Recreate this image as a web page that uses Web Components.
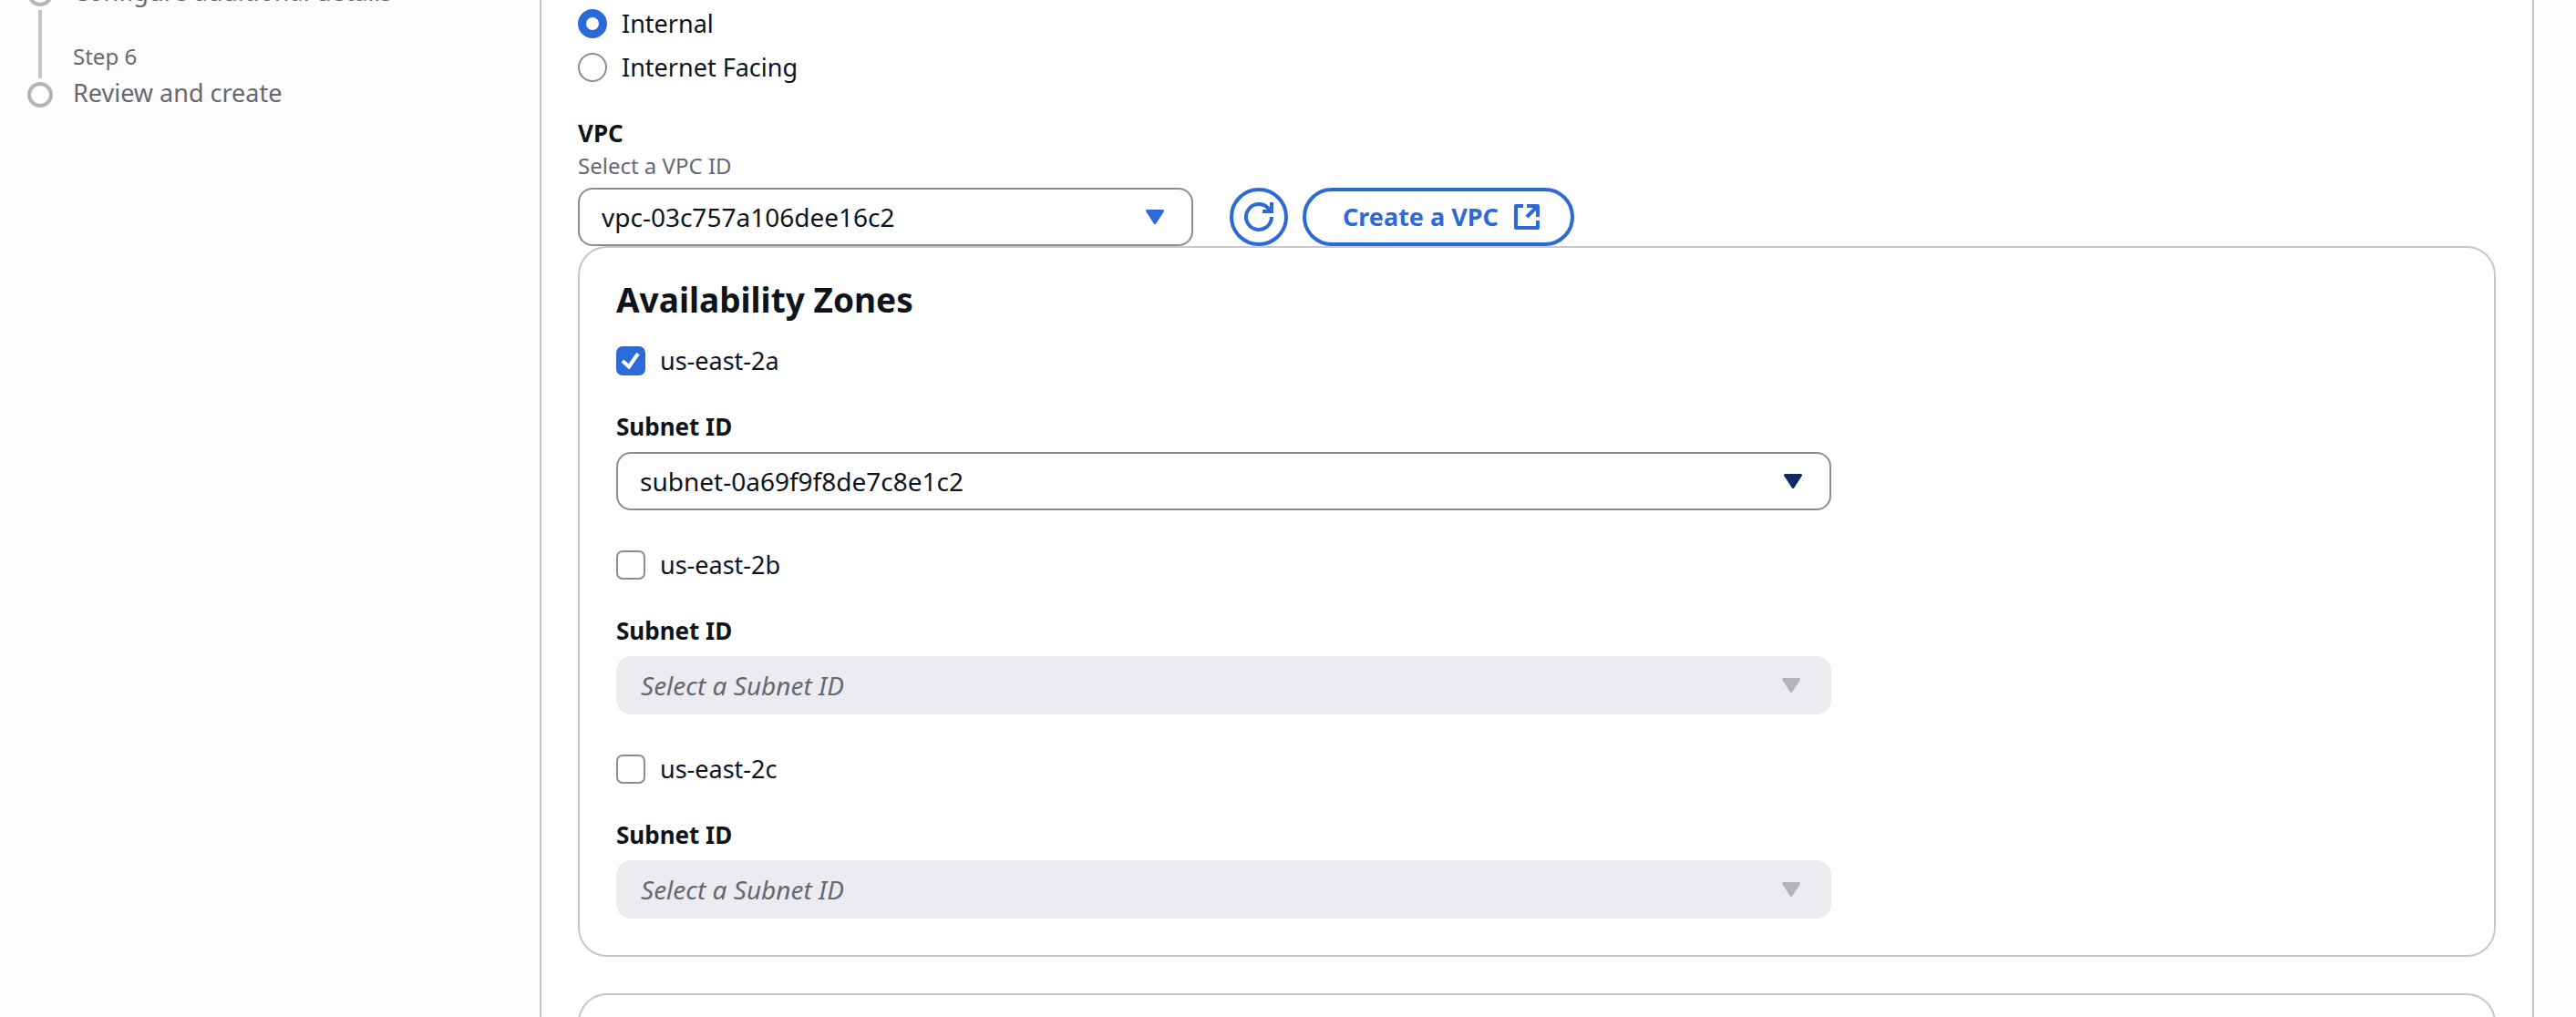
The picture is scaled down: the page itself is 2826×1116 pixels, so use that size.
<!DOCTYPE html>
<html lang="en">
<head>
<meta charset="utf-8">
<title>Create wizard</title>
<style>
  :root {
    --text: #0f141a;
    --muted: #656871;
    --accent: #2c6ad9;
    --accent-dark: #102a66;
    --line: #c6c6cd;
    --control: #8c8c94;
    --disabled: #ebebf0;
    --surface: #fcfcfd;
  }
  html { overflow: hidden; }
  body {
    margin: 0;
    background: var(--surface);
    color: var(--text);
    font: 450 27px/40px "Noto Sans", "Open Sans", sans-serif;
  }
</style>
</head>
<body>
<wizard-page></wizard-page>

<script>
const define = (name, html, setup) => {
  const template = document.createElement('template');
  template.innerHTML = html;
  customElements.define(name, class extends HTMLElement {
    connectedCallback() {
      if (this.shadowRoot) return;
      const root = this.attachShadow({ mode: 'open' });
      root.append(template.content.cloneNode(true));
      if (setup) setup(this, root);
    }
  });
};

// One step of the wizard: a marker column beside the step number and title.
define('wizard-step', `
  <style>
    :host { display: grid; grid-template-columns: 28px 1fr; column-gap: 22px; color: var(--muted); }
    .marker { display: flex; flex-direction: column; align-items: center; justify-content: flex-end; gap: 4px; padding-bottom: 4px; }
    .bar { display: none; flex: 1; width: 4px; background: var(--line); }
    .ring { box-sizing: border-box; width: 28px; height: 28px; border: 4px solid #b4b4bb; border-radius: 50%; background: #fff; box-shadow: 0 0 0 4px #fff; }
    .number { display: none; font-size: 24px; line-height: 32px; margin-bottom: 4px; }
    :host([number]) .bar, :host([number]) .number { display: block; }
    :host([number]) .body { padding-top: 35px; }
  </style>
  <div class="marker"><span class="bar"></span><span class="ring"></span></div>
  <div class="body"><div class="number"></div><div class="title"><slot></slot></div></div>
`, (el, root) => {
  if (el.hasAttribute('number')) root.querySelector('.number').textContent = 'Step ' + el.getAttribute('number');
});

define('wizard-steps', `
  <style>
    :host { display: block; }
    nav { padding-left: 30px; margin-top: -29px; }
  </style>
  <nav aria-label="Steps"><slot></slot></nav>
`);

define('choice-input', `
  <style>
    :host { display: block; }
    label { display: flex; align-items: center; gap: 16px; width: fit-content; }
    input {
      appearance: none; box-sizing: border-box; flex: none; margin: 0;
      width: 32px; height: 32px; border: 2px solid var(--control); background: #fff;
      display: grid; place-items: center;
    }
    input, svg { grid-area: 1 / 1; }
    .box { display: grid; place-items: center; }
    input[type=radio] { border-radius: 50%; }
    input[type=radio]:checked { border: 9px solid var(--accent); }
    input[type=checkbox] { border-radius: 7px; }
    input[type=checkbox]:checked { background: var(--accent); border-color: var(--accent); }
    svg { display: none; pointer-events: none; }
    input[type=checkbox]:checked + svg { display: block; }
  </style>
  <label>
    <span class="box">
      <input>
      <svg width="32" height="32" viewBox="0 0 32 32" fill="none" stroke="#fff" stroke-width="4"><path d="M7 16l7 6.500L24 8"/></svg>
    </span>
    <span><slot></slot></span>
  </label>
`, (el, root) => {
  const input = root.querySelector('input');
  input.type = el.getAttribute('type');
  input.name = el.getAttribute('name') || '';
  input.checked = el.hasAttribute('checked');
});

define('select-field', `
  <style>
    :host { display: block; }
    label { display: block; font-size: 26px; font-weight: 700; width: fit-content; }
    .hint { display: none; font-size: 24px; line-height: 32px; color: var(--muted); }
    :host([hint]) .hint { display: block; }
    .control { display: grid; align-items: center; margin-top: 8px; }
    select, svg { grid-area: 1 / 1; }
    select {
      appearance: none; box-sizing: border-box; width: 100%; height: 64px; margin: 0;
      padding: 0 80px 0 24px; border: 2px solid var(--control); border-radius: 16px;
      background: #fff; color: var(--text); font: inherit; font-size: 28px; font-weight: 400;
    }
    svg { justify-self: end; margin-right: 32px; pointer-events: none; fill: var(--arrow, var(--accent)); stroke: var(--arrow, var(--accent)); }
    select:disabled {
      border: 0; padding-left: 27px; background: var(--disabled); color: var(--muted);
      font-style: italic; opacity: 1;
    }
    select:disabled + svg { margin-right: 34px; fill: #b4b4bb; stroke: #b4b4bb; }
  </style>
  <label for="s"></label>
  <div class="hint" id="h"></div>
  <div class="control">
    <select id="s" aria-describedby="h"><option></option></select>
    <svg width="20" height="16" viewBox="0 0 20 16" stroke-width="3" stroke-linejoin="round"><path d="M1.500 1.500h17L10 14.500z"/></svg>
  </div>
`, (el, root) => {
  root.querySelector('label').textContent = el.getAttribute('label');
  root.querySelector('.hint').textContent = el.getAttribute('hint') || '';
  root.querySelector('option').textContent = el.getAttribute('value');
  root.querySelector('select').disabled = el.hasAttribute('disabled');
});

define('outline-button', `
  <style>
    :host { display: block; }
    button {
      box-sizing: border-box; display: flex; align-items: center; justify-content: space-between;
      min-width: 298px; height: 64px; margin: 0; padding: 0 34px 0 40px; border: 4px solid var(--accent);
      border-radius: 32px; background: #fff; color: var(--accent);
      font: inherit; font-weight: 700; white-space: nowrap;
    }
    :host([round]) button { min-width: 64px; width: 64px; padding: 0; justify-content: center; }
  </style>
  <button type="button"><slot></slot></button>
`, (el, root) => {
  if (el.hasAttribute('label')) root.querySelector('button').setAttribute('aria-label', el.getAttribute('label'));
});

define('panel-card', `
  <style>
    :host { display: block; box-sizing: border-box; min-height: 80px; padding: 32px 40px 40px; border: 2px solid var(--line); border-radius: 32px; background: #fff; }
  </style>
  <slot></slot>
`);

define('zone-field', `
  <style>
    :host { display: grid; gap: 32px; }
    select-field { width: 66%; --arrow: var(--accent-dark); }
  </style>
`, (el, root) => {
  const add = (tag, attrs, text) => {
    const node = document.createElement(tag);
    for (const [key, value] of Object.entries(attrs)) node.setAttribute(key, value);
    node.textContent = text;
    root.append(node);
  };
  const subnet = el.getAttribute('subnet');
  add('choice-input', subnet ? { type: 'checkbox', checked: '' } : { type: 'checkbox' }, el.getAttribute('zone'));
  add('select-field', subnet ? { label: 'Subnet ID', value: subnet } : { label: 'Subnet ID', value: 'Select a Subnet ID', disabled: '' }, '');
});

define('vpc-form', `
  <style>
    :host { display: block; padding: 6px 40px 0; }
    .radios { display: grid; gap: 8px; margin-bottom: 32px; }
    .vpc { display: flex; align-items: flex-end; }
    .vpc select-field { flex: 0 1 675px; margin-right: 40px; }
    .vpc outline-button + outline-button { margin-left: 16px; }
    h2 { margin: 0 0 22px; font-size: 37px; line-height: 50px; font-weight: 700; }
    .zones { display: grid; gap: 40px; }
    panel-card + panel-card { margin-top: 40px; }
    svg { display: block; }
  </style>
  <div class="radios" role="radiogroup" aria-label="Scheme">
    <choice-input type="radio" name="scheme" checked>Internal</choice-input>
    <choice-input type="radio" name="scheme">Internet Facing</choice-input>
  </div>
  <div class="vpc">
    <select-field label="VPC" hint="Select a VPC ID" value="vpc-03c757a106dee16c2"></select-field>
    <outline-button round label="Refresh">
      <svg width="32" height="32" viewBox="0 0 32 32" fill="none" stroke="currentColor" stroke-width="4"><path d="M30 16a14 14 0 1 1-3.500-9.300L29 10.200"/><path d="M30 0v10H20"/></svg>
    </outline-button>
    <outline-button>Create a VPC
      <svg width="28" height="28" viewBox="0 0 28 28" fill="none" stroke="currentColor" stroke-width="4"><path d="M10 2H2v24h24v-8" stroke-linejoin="round"/><path d="M14 2h12v12" stroke-linejoin="round"/><path d="M26 2L14 14"/></svg>
    </outline-button>
  </div>
  <panel-card>
    <h2>Availability Zones</h2>
    <div class="zones">
      <zone-field zone="us-east-2a" subnet="subnet-0a69f9f8de7c8e1c2"></zone-field>
      <zone-field zone="us-east-2b"></zone-field>
      <zone-field zone="us-east-2c"></zone-field>
    </div>
  </panel-card>
  <panel-card></panel-card>
`);

define('wizard-page', `
  <style>
    :host { display: flex; min-height: 100vh; }
    wizard-steps { flex: none; width: 592px; }
    main { flex: 1; min-width: 0; margin-right: 46px; border: solid var(--line); border-width: 0 2px; background: #fff; }
  </style>
  <wizard-steps>
    <wizard-step>Configure additional details</wizard-step>
    <wizard-step number="6">Review and create</wizard-step>
  </wizard-steps>
  <main><vpc-form></vpc-form></main>
`);
</script>
</body>
</html>
